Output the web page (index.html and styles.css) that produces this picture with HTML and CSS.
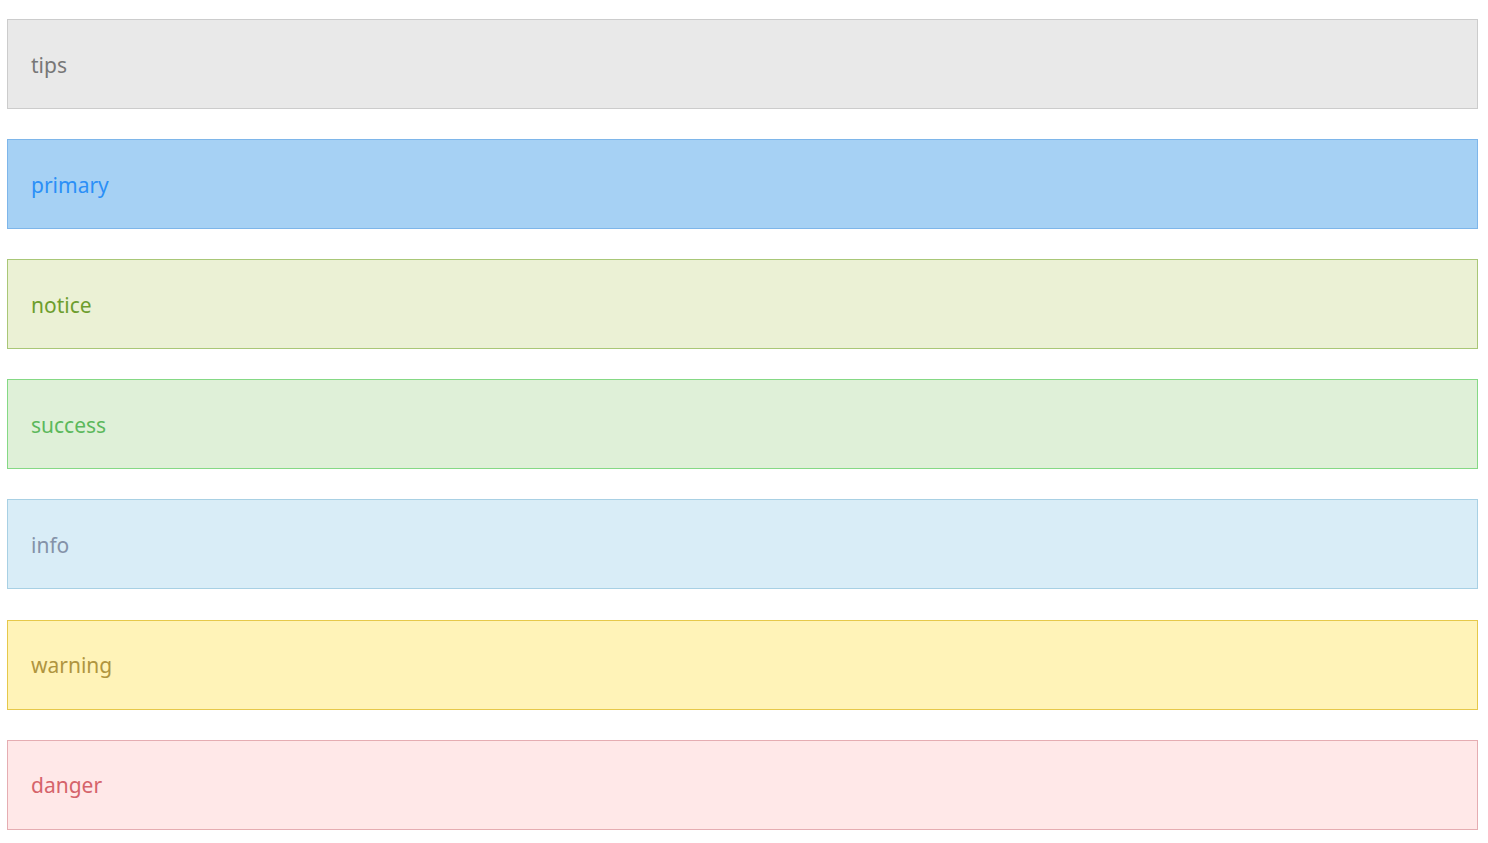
FILE: index.html
```html
<!DOCTYPE html>
<html>
<head>
<meta charset="utf-8">
<link rel="stylesheet" href="styles.css">
</head>
<body>
<div class="list">
  <div class="alert tips">tips</div>
  <div class="alert primary">primary</div>
  <div class="alert notice">notice</div>
  <div class="alert success">success</div>
  <div class="alert info">info</div>
  <div class="alert warning">warning</div>
  <div class="alert danger">danger</div>
</div>
</body>
</html>
```
FILE: styles.css
```css
html, body {
  margin: 0;
  padding: 0;
  background: #ffffff;
}
.list {
  display: flex;
  flex-direction: column;
  gap: 30.12px;
  padding: 19px 0 0 7px;
  width: 1471px;
}
.alert {
  box-sizing: border-box;
  height: 90px;
  border: 1px solid;
  display: flex;
  align-items: center;
  padding: 1px 23px 0;
  font-family: "Noto Sans", "Open Sans", sans-serif;
  font-size: 21px;
}
.tips { background: #e9e9e9; border-color: #cccccc; color: #777777; }
.primary { background: #a6d1f4; border-color: #7eb6ea; color: #2a8ff7; }
.notice { background: #ebf1d5; border-color: #a9c777; color: #6d9e2e; }
.success { background: #dff0d8; border-color: #85d985; color: #5cb85c; }
.info { background: #d9edf7; border-color: #a8d0e4; color: #8492a8; }
.warning { background: #fff3b8; border-color: #e6c84a; color: #b0953f; }
.danger { background: #ffe8e8; border-color: #e5adb2; color: #d5636a; }
```
